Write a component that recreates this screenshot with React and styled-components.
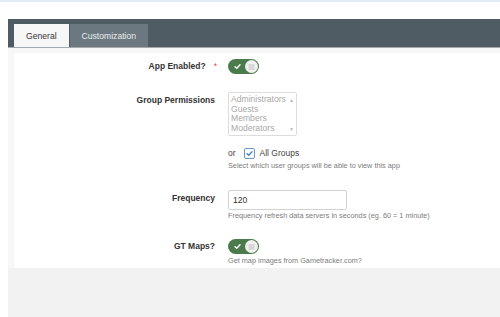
import React from 'react'
import styled, { createGlobalStyle } from 'styled-components'

const Global = createGlobalStyle`
  html, body {
    margin: 0;
    padding: 0;
    background: #fff;
    font-family: "Liberation Sans", Arial, sans-serif;
    overflow: hidden;
  }
`

const TopLine = styled.div`
  height: 2px;
  background: #e1ebf6;
`

const Panel = styled.div`
  margin: 17px 0 0 8px;
  background: #f7f7f7;
`

const TabBar = styled.div`
  display: flex;
  align-items: flex-end;
  height: 29px;
  padding-left: 6px;
  background: #505c64;
  border-bottom: 1px solid #a4a9ad;
  box-sizing: border-box;
`

const Tab = styled.div`
  height: 23px;
  padding: 0 12px;
  margin-right: 1px;
  display: flex;
  align-items: center;
  font-size: 8.6px;
  background: ${p => (p.$active ? '#f7f7f7' : '#6b7880')};
  color: ${p => (p.$active ? '#333' : '#e9ecee')};
`

const Body = styled.div`
  padding: 5px 0 0 6px;
`

const Content = styled.div`
  background: #fff;
  height: 215px;
  padding-top: 6px;
  box-sizing: border-box;
`

const Row = styled.div`
  display: flex;
  margin-top: ${p => p.$top || 0}px;
`

const Label = styled.div`
  width: 201px;
  flex: none;
  text-align: right;
  font-size: 8.5px;
  font-weight: bold;
  color: #333;
  line-height: ${p => p.$lh || 16}px;
`

const Required = styled.span`
  color: #d9534f;
  font-weight: normal;
  margin-left: 8px;
  margin-right: -2px;
`

const Control = styled.div`
  margin-left: 13px;
  display: flex;
  flex-direction: column;
`

const Toggle = styled.div`
  width: 31px;
  height: 15px;
  border-radius: 8px;
  background: #4b7b4d;
  display: flex;
  align-items: center;
  justify-content: space-between;
  padding: 0 1px 0 6px;
  box-sizing: border-box;
`

const Knob = styled.div`
  width: 13px;
  height: 13px;
  border-radius: 50%;
  background: #f1f1f1;
  display: flex;
  align-items: center;
  justify-content: center;
`

const Select = styled.div`
  width: 69px;
  height: 44px;
  border: 1px solid #dcdcdc;
  border-radius: 2px;
  box-sizing: border-box;
  display: flex;
  overflow: hidden;
`

const Options = styled.div`
  flex: 1;
  padding: 2px 0 0 2px;
  font-size: 8.6px;
  line-height: 9.6px;
  color: #a9a9a9;
`

const ScrollTrack = styled.div`
  width: 9px;
  display: flex;
  flex-direction: column;
  justify-content: space-between;
  align-items: center;
  padding: 4px 0 3px;
  font-size: 5px;
  color: #b8b8b8;
`

const OrLine = styled.div`
  display: flex;
  align-items: center;
  gap: 5px;
  margin-top: 11px;
  height: 12px;
  font-size: 8.5px;
  color: #444;
`

const Check = styled.div`
  width: 9px;
  height: 9px;
  border: 1px solid #6a98c9;
  border-radius: 2px;
  display: flex;
  align-items: center;
  justify-content: center;
  margin-left: 3px;
`

const Help = styled.div`
  margin-top: ${p => p.$top || 2}px;
  font-size: 7.3px;
  line-height: 10px;
  color: #7d7d7d;
  white-space: nowrap;
`

const Input = styled.div`
  width: 119px;
  height: 20px;
  border: 1px solid #d2d2d2;
  border-radius: 2px;
  box-sizing: border-box;
  padding-left: 4px;
  display: flex;
  align-items: center;
  font-size: 8.6px;
  color: #333;
`

const Footer = styled.div`
  height: 60px;
  background: #f2f2f2;
`

const Tick = ({ color = '#fff', size = 7 }) => (
  <svg width={size} height={size} viewBox="0 0 10 10">
    <path d="M1.5 5.2 L4 7.6 L8.6 2.6" fill="none" stroke={color} strokeWidth="2" strokeLinecap="round" strokeLinejoin="round" />
  </svg>
)

const Lines = () => (
  <svg width="7" height="6" viewBox="0 0 7 6">
    <path d="M0.5 1 H6.5 M0.5 3 H6.5 M0.5 5 H6.5" stroke="#b5b5b5" strokeWidth="0.8" />
  </svg>
)

const Switch = () => (
  <Toggle>
    <Tick />
    <Knob>
      <Lines />
    </Knob>
  </Toggle>
)

const groups = ['Administrators', 'Guests', 'Members', 'Moderators']

export default function App() {
  return (
    <>
      <Global />
      <TopLine />
      <Panel>
        <TabBar>
          <Tab $active>General</Tab>
          <Tab>Customization</Tab>
        </TabBar>
        <Body>
          <Content>
            <Row $top={0}>
              <Label $lh={15}>
                App Enabled?<Required>*</Required>
              </Label>
              <Control>
                <Switch />
              </Control>
            </Row>

            <Row $top={18}>
              <Label>Group Permissions</Label>
              <Control>
                <Select>
                  <Options>
                    {groups.map(g => (
                      <div key={g}>{g}</div>
                    ))}
                  </Options>
                  <ScrollTrack>
                    <span>▲</span>
                    <span>▼</span>
                  </ScrollTrack>
                </Select>
                <OrLine>
                  or
                  <Check>
                    <Tick color="#4a86c5" size={7} />
                  </Check>
                  All Groups
                </OrLine>
                <Help>Select which user groups will be able to view this app</Help>
              </Control>
            </Row>

            <Row $top={19}>
              <Label>Frequency</Label>
              <Control>
                <Input>120</Input>
                <Help $top={1}>Frequency refresh data servers in seconds (eg. 60 = 1 minute)</Help>
              </Control>
            </Row>

            <Row $top={18}>
              <Label $lh={15}>GT Maps?</Label>
              <Control>
                <Switch />
                <Help $top={2}>Get map images from Gametracker.com?</Help>
              </Control>
            </Row>
          </Content>
        </Body>
        <Footer />
      </Panel>
    </>
  )
}
